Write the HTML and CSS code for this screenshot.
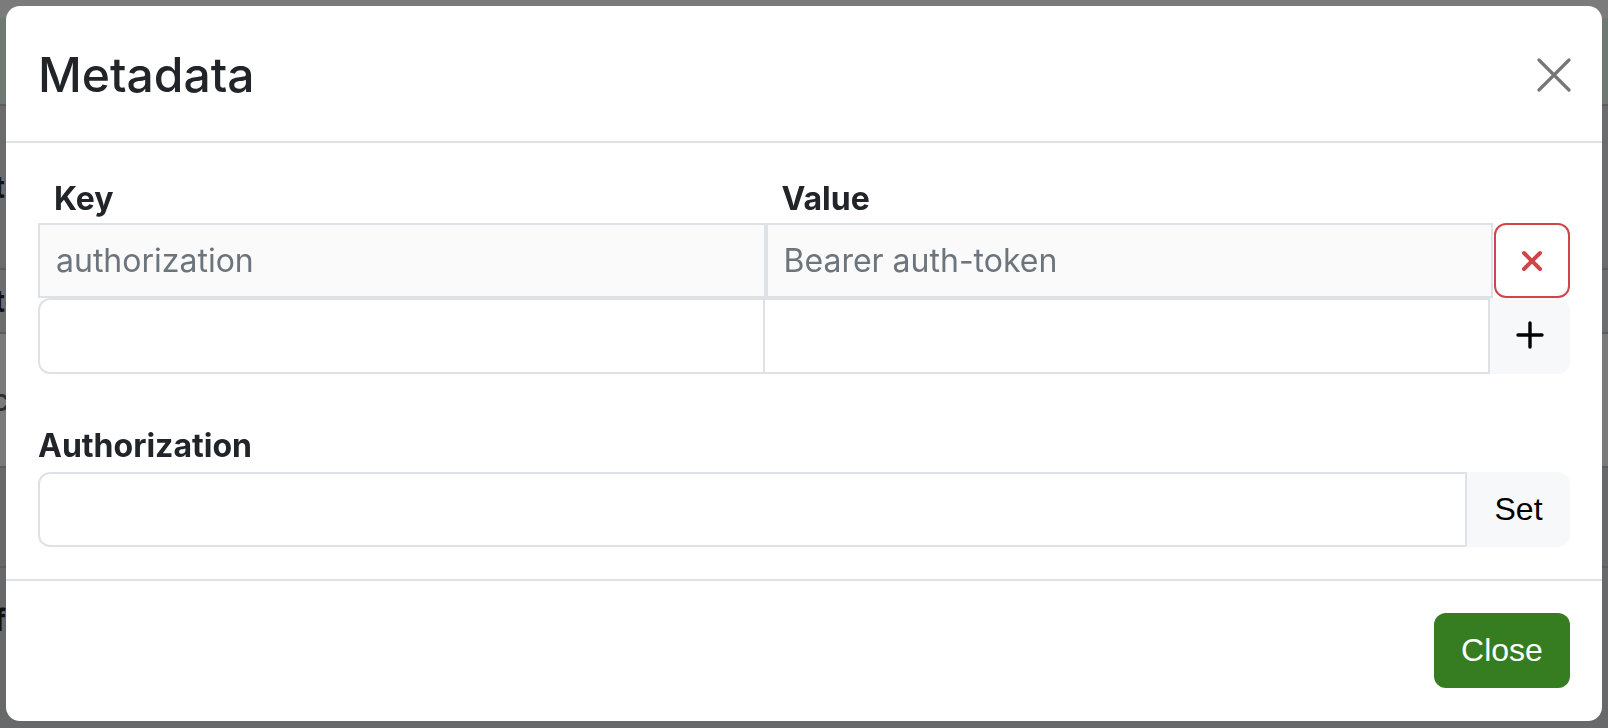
FILE: index.html
```html
<!DOCTYPE html>
<html lang="en">
<head>
<meta charset="utf-8">
<title>Metadata</title>
<link rel="stylesheet" href="styles.css">
</head>
<body>
<div class="page">
  <div class="band band-top"></div>
  <div class="band band-green"></div>
  <div class="band band-a"><span class="glyph">test</span></div>
  <div class="band band-b"><span class="glyph">test</span></div>
  <div class="band band-c"><span class="glyph light">cache</span></div>
  <div class="band band-d"></div>
  <div class="band band-e"><span class="glyph">false</span></div>
</div>

<div class="modal" role="dialog">
  <div class="modal-header">
    <h5 class="modal-title">Metadata</h5>
    <button class="btn-x" aria-label="Close">
      <svg width="34" height="34" viewBox="0 0 34 34"><path d="M2 2 L32 32 M32 2 L2 32" stroke="#767676" stroke-width="3.2" stroke-linecap="round" fill="none"/></svg>
    </button>
  </div>
  <div class="modal-body">
    <div class="meta-head">
      <div class="th">Key</div>
      <div class="th">Value</div>
      <div class="th-spacer"></div>
    </div>
    <div class="meta-row first">
      <input class="cell key" value="authorization" readonly>
      <input class="cell val" value="Bearer auth-token" readonly>
      <button class="btn-del" aria-label="Remove">
        <svg width="22" height="22" viewBox="0 0 22 22"><path d="M3 3 L19 19 M19 3 L3 19" stroke="#d0454a" stroke-width="4" stroke-linecap="round" fill="none"/></svg>
      </button>
    </div>
    <div class="meta-row second">
      <input class="cell key">
      <input class="cell val">
      <button class="btn-add" aria-label="Add">
        <svg width="28" height="28" viewBox="0 0 28 28"><path d="M14 2 L14 26 M2 14 L26 14" stroke="#000" stroke-width="3.4" stroke-linecap="round" fill="none"/></svg>
      </button>
    </div>
    <label class="auth-label">Authorization</label>
    <div class="input-group">
      <input class="auth-input">
      <button class="btn-set">Set</button>
    </div>
  </div>
  <div class="modal-footer">
    <button class="btn-close">Close</button>
  </div>
</div>
</body>
</html>
```

FILE: styles.css
```css
* { box-sizing: border-box; }

html, body {
  margin: 0;
  padding: 0;
  width: 1608px;
  height: 728px;
  overflow: hidden;
}

body {
  background: #68696b;
  font-family: "Inter", "Noto Sans", sans-serif;
  color: #212529;
}

/* underlying page seen through the backdrop */
.page {
  display: flex;
  flex-direction: column;
  height: 728px;
  overflow: hidden;
}
.band {
  flex: none;
  border-bottom: 2px solid #5c5d5f;
  display: flex;
  align-items: center;
  overflow: hidden;
}
.band-top { height: 18px; background: #7b7b7b; border-bottom: none; }
.band-green { height: 88px; background: #6f7971; }
.band-a { height: 164px; background: #6a6b6d; }
.band-b { height: 64px; background: #6c6d6f; }
.band-c { height: 134px; background: #7a7a7a; }
.band-d { height: 100px; background: #67686a; }
.band-e { height: 150px; background: #67686a; border-bottom: none; align-items: flex-start; padding-top: 32px; }
.glyph {
  font-family: "Inter", sans-serif;
  font-weight: 700;
  font-size: 30px;
  line-height: 40px;
  color: #111;
  margin-left: -6px;
  white-space: nowrap;
}
.glyph.light { color: #2e2e2e; font-weight: 500; margin-left: -8px; }

/* modal overlay */
.modal {
  position: fixed;
  left: 6px;
  top: 6px;
  width: 1596px;
  height: 715px;
  background: #fff;
  border-radius: 14px;
  display: flex;
  flex-direction: column;
  overflow: hidden;
}

.modal-header {
  height: 137px;
  padding: 2px 32px 0 32px;
  border-bottom: 2px solid #dee2e6;
  display: flex;
  align-items: center;
  justify-content: space-between;
}
.modal-title {
  margin: 0;
  font-size: 48px;
  font-weight: 500;
  line-height: 1.2;
  color: #212529;
}
.btn-x {
  width: 34px;
  height: 34px;
  padding: 0;
  border: none;
  background: none;
  display: flex;
  margin-right: -1px;
}

.modal-body {
  padding: 32px 32px 32px 32px;
  border-bottom: 2px solid #dee2e6;
  display: flex;
  flex-direction: column;
}

.meta-head {
  display: flex;
  height: 48px;
}
.th {
  flex: 1;
  padding-left: 16px;
  font-size: 32px;
  font-weight: 700;
  line-height: 48px;
  color: #212529;
}
.th-spacer { width: 77px; }

.meta-row {
  display: flex;
  height: 75px;
}
.meta-row.second { height: 76px; }

.cell {
  flex: 1;
  min-width: 0;
  height: 100%;
  margin: 0;
  border: 2px solid #dee2e6;
  border-radius: 0;
  padding: 0 16px;
  font-family: "Inter", "Noto Sans", sans-serif;
  font-size: 32px;
  color: #6c757d;
  background: #fff;
  outline: none;
}
.first .cell { background: #fafafa; }
.second .key { border-radius: 12px 0 0 12px; }
.second .val { margin-left: -2px; }

.btn-del {
  width: 76px;
  margin-left: 1px;
  height: 100%;
  border: 2px solid #d0454a;
  border-radius: 12px;
  background: #fff;
  display: flex;
  align-items: center;
  justify-content: center;
  padding: 0;
}
.btn-add {
  width: 80px;
  height: 100%;
  border: none;
  border-radius: 0 12px 12px 0;
  background: #f7f8fa;
  display: flex;
  align-items: center;
  justify-content: center;
  padding: 0 0 2px 0;
}

.auth-label {
  margin-top: 48px;
  margin-bottom: 2px;
  font-size: 32px;
  font-weight: 700;
  line-height: 48px;
  color: #212529;
}

.input-group {
  display: flex;
  height: 75px;
}
.auth-input {
  flex: 1;
  min-width: 0;
  margin: 0;
  border: 2px solid #dee2e6;
  border-radius: 12px 0 0 12px;
  padding: 0 16px;
  font-family: "Inter", sans-serif;
  font-size: 32px;
  outline: none;
  background: #fff;
}
.btn-set {
  width: 103px;
  border: none;
  border-radius: 0 12px 12px 0;
  background: #f7f8fa;
  font-family: "Liberation Sans", Arial, sans-serif;
  font-size: 32px;
  color: #000;
  padding: 0;
}

.modal-footer {
  flex: 1;
  padding: 32px 32px 33px 32px;
  display: flex;
  justify-content: flex-end;
  align-items: flex-start;
}
.btn-close {
  width: 136px;
  height: 75px;
  border: none;
  border-radius: 12px;
  background: #367c21;
  color: #fff;
  font-family: "Liberation Sans", Arial, sans-serif;
  font-size: 32px;
  padding: 0;
}
```
